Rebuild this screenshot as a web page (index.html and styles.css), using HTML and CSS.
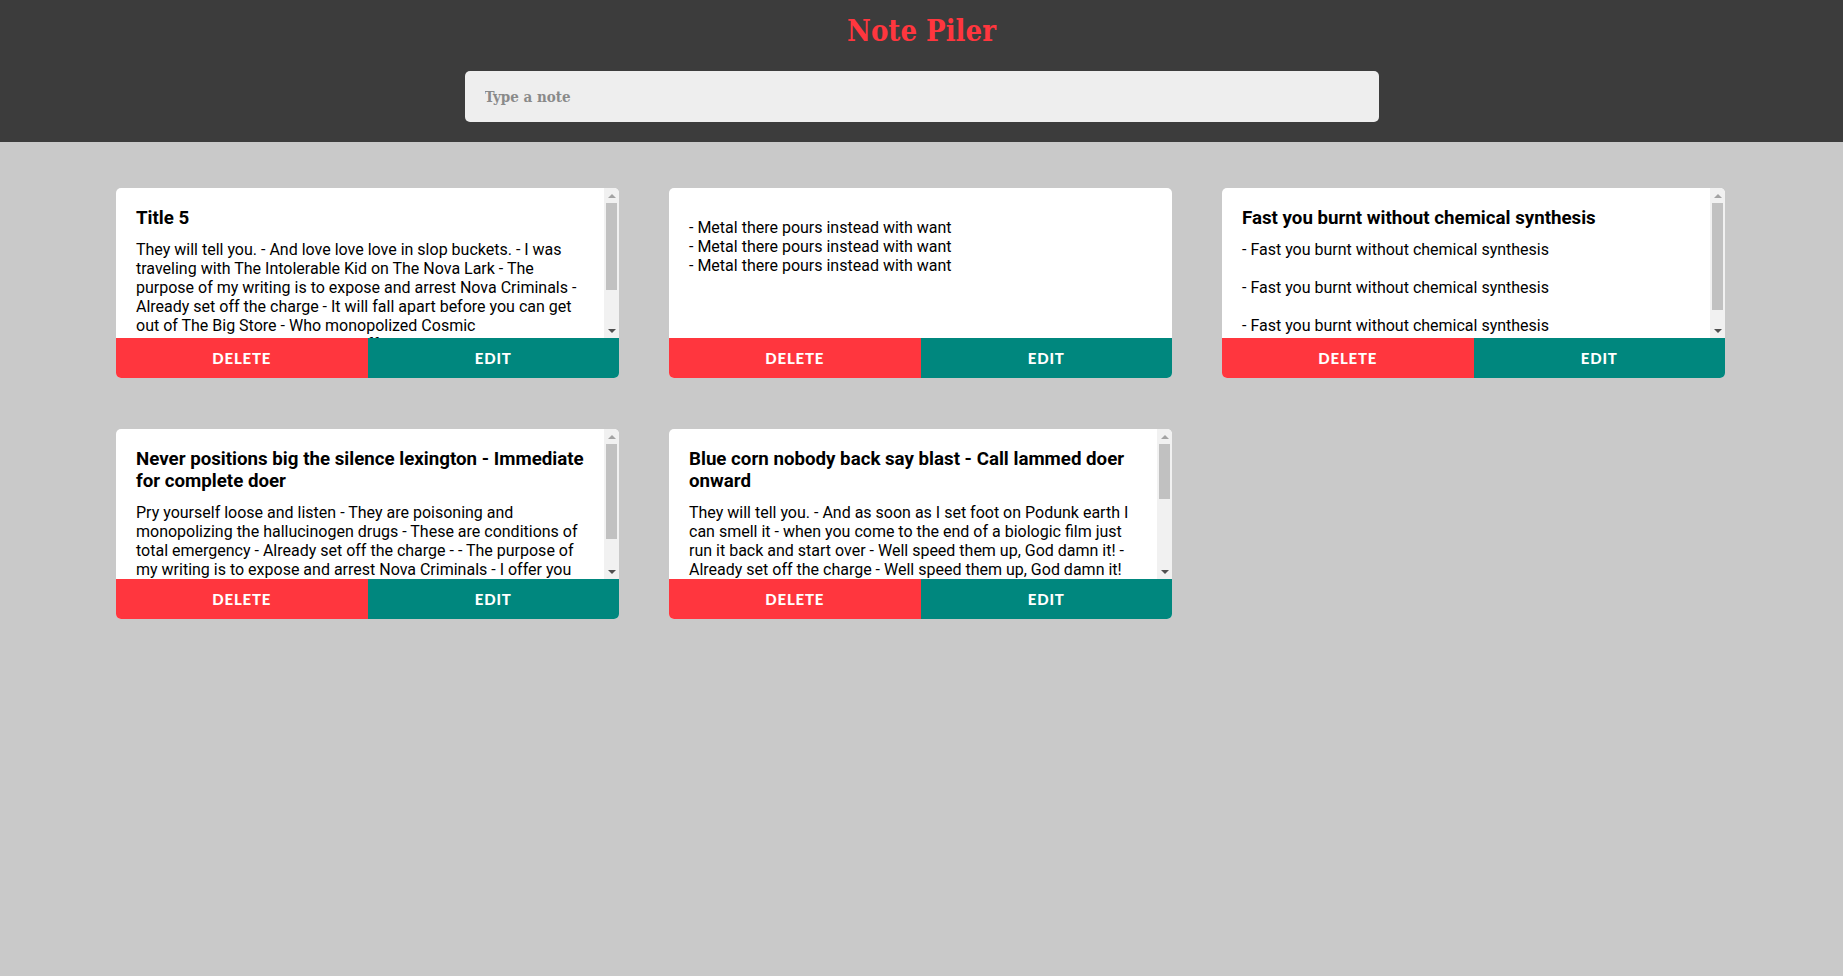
FILE: index.html
```html
<!DOCTYPE html>
<html lang="en">
<head>
<meta charset="utf-8">
<title>Note Piler</title>
<link rel="stylesheet" href="styles.css">
</head>
<body>
<header class="top">
  <h1 class="brand">Note Piler</h1>
  <input class="note-input" type="text" placeholder="Type a note">
</header>
<main class="notes">
  <article class="note">
    <div class="note-top">
      <div class="note-body">
        <h2 class="note-title">Title 5</h2>
        <p class="note-text">They will tell you. - And love love love in slop buckets. - I was traveling with The Intolerable Kid on The Nova Lark - The purpose of my writing is to expose and arrest Nova Criminals - Already set off the charge - It will fall apart before you can get out of The Big Store - Who monopolized Cosmic consciousness soon as we ran off our own screens across a sea now we are running over - The Subliminal Kid moved in and took over bars cafes and juke boxes</p>
      </div>
      <div class="scrollbar"><span class="sb-arrow sb-up"></span><div class="sb-track"><div class="sb-thumb" style="height:87px"></div></div><span class="sb-arrow sb-down"></span></div>
    </div>
    <div class="note-actions"><button class="btn btn-delete">Delete</button><button class="btn btn-edit">Edit</button></div>
  </article>
  <article class="note">
    <div class="note-top">
      <div class="note-body">
        <h2 class="note-title"></h2>
        <p class="note-text">- Metal there pours instead with want
- Metal there pours instead with want
- Metal there pours instead with want</p>
      </div>
    </div>
    <div class="note-actions"><button class="btn btn-delete">Delete</button><button class="btn btn-edit">Edit</button></div>
  </article>
  <article class="note">
    <div class="note-top">
      <div class="note-body">
        <h2 class="note-title">Fast you burnt without chemical synthesis</h2>
        <p class="note-text">- Fast you burnt without chemical synthesis

- Fast you burnt without chemical synthesis

- Fast you burnt without chemical synthesis</p>
      </div>
      <div class="scrollbar"><span class="sb-arrow sb-up"></span><div class="sb-track"><div class="sb-thumb" style="height:107px"></div></div><span class="sb-arrow sb-down"></span></div>
    </div>
    <div class="note-actions"><button class="btn btn-delete">Delete</button><button class="btn btn-edit">Edit</button></div>
  </article>
  <article class="note">
    <div class="note-top">
      <div class="note-body">
        <h2 class="note-title">Never positions big the silence lexington - Immediate for complete doer</h2>
        <p class="note-text">Pry yourself loose and listen - They are poisoning and monopolizing the hallucinogen drugs - These are conditions of total emergency - Already set off the charge - - The purpose of my writing is to expose and arrest Nova Criminals - I offer you all my nova sensations</p>
      </div>
      <div class="scrollbar"><span class="sb-arrow sb-up"></span><div class="sb-track"><div class="sb-thumb" style="height:95px"></div></div><span class="sb-arrow sb-down"></span></div>
    </div>
    <div class="note-actions"><button class="btn btn-delete">Delete</button><button class="btn btn-edit">Edit</button></div>
  </article>
  <article class="note">
    <div class="note-top">
      <div class="note-body">
        <h2 class="note-title">Blue corn nobody back say blast - Call lammed doer onward</h2>
        <p class="note-text">They will tell you. - And as soon as I set foot on Podunk earth I can smell it - when you come to the end of a biologic film just run it back and start over - Well speed them up, God damn it! - Already set off the charge - Well speed them up, God damn it! Pry yourself loose and listen - Who monopolized Cosmic Consciousness in the Milky Way Galaxy? - I was traveling with The Intolerable Kid on The Nova Lark - The purpose of my writing is to expose and arrest Nova Criminals - It will fall apart before you can get out of The Big Store - They are poisoning and monopolizing the hallucinogen drugs - These are conditions of total emergency</p>
      </div>
      <div class="scrollbar"><span class="sb-arrow sb-up"></span><div class="sb-track"><div class="sb-thumb" style="height:55px"></div></div><span class="sb-arrow sb-down"></span></div>
    </div>
    <div class="note-actions"><button class="btn btn-delete">Delete</button><button class="btn btn-edit">Edit</button></div>
  </article>
</main>
</body>
</html>
```

FILE: styles.css
```css
html, body {
  margin: 0;
  padding: 0;
}
body {
  background: #c9c9c9;
  font-family: Roboto, "Liberation Sans", sans-serif;
  color: #000;
  min-height: 976px;
}
.top {
  background: #3c3c3c;
  display: flex;
  flex-direction: column;
  align-items: center;
  padding: 11px 0 20px;
}
.brand {
  margin: 0;
  font-family: "Roboto Slab", "DejaVu Serif", serif;
  font-stretch: condensed;
  font-weight: 700;
  font-size: 29px;
  line-height: 41px;
  color: #ff363e;
}
.note-input {
  margin-top: 19px;
  width: 914px;
  height: 51px;
  box-sizing: border-box;
  border: none;
  border-radius: 5px;
  background: #eeeeee;
  padding: 0 20px;
  font-family: "Roboto Slab", "DejaVu Serif", serif;
  font-stretch: condensed;
  font-weight: 700;
  font-size: 15px;
  outline: none;
}
.note-input::placeholder {
  color: #8a8a8a;
}
.notes {
  display: grid;
  grid-template-columns: repeat(3, 503px);
  column-gap: 50px;
  row-gap: 51px;
  padding: 46px 0 0 116px;
}
.note {
  background: #fff;
  border-radius: 5px;
  overflow: hidden;
  display: flex;
  flex-direction: column;
}
.note-top {
  display: flex;
  height: 150px;
}
.note-body {
  flex: 1 1 auto;
  min-width: 0;
  box-sizing: border-box;
  overflow: hidden;
  padding: 20px;
}
.note-title {
  margin: 0 0 10px;
  font-size: 18.72px;
  line-height: 21.9px;
  font-weight: 700;
}
.note-text {
  margin: 0;
  font-size: 16px;
  line-height: 19px;
  white-space: pre-wrap;
}
.scrollbar {
  flex: 0 0 15px;
  display: flex;
  flex-direction: column;
  background: #f1f1f1;
}
.sb-arrow {
  flex: 0 0 15px;
  display: flex;
  align-items: center;
  justify-content: center;
}
.sb-arrow::before {
  content: "";
  width: 0;
  height: 0;
  border-left: 4px solid transparent;
  border-right: 4px solid transparent;
}
.sb-up::before {
  border-bottom: 4px solid #a3a3a3;
}
.sb-down::before {
  border-top: 4px solid #505050;
}
.sb-track {
  flex: 1 1 auto;
  display: flex;
  flex-direction: column;
  align-items: center;
}
.sb-thumb {
  width: 11px;
  background: #c1c1c1;
}
.note-actions {
  display: flex;
  height: 40px;
}
.btn {
  flex: 1 1 50%;
  border: none;
  margin: 0;
  padding: 0;
  color: #fff;
  font-family: Lato, "Open Sans", sans-serif;
  font-weight: 900;
  font-size: 15px;
  letter-spacing: 0.8px;
  text-transform: uppercase;
  cursor: pointer;
}
.btn-delete {
  background: #ff363e;
}
.btn-edit {
  background: #00877e;
}
```
